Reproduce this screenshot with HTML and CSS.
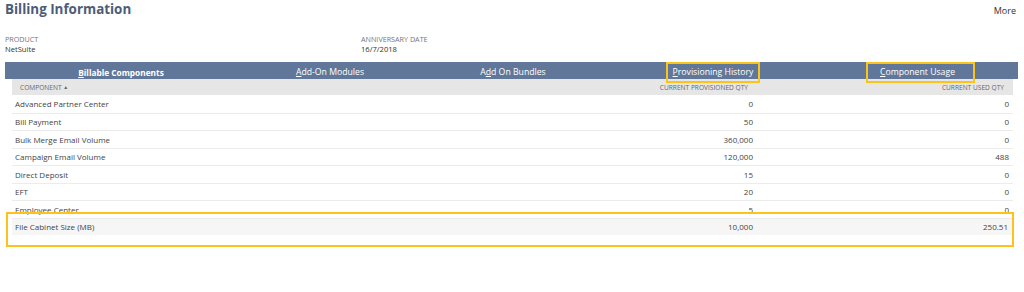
FILE: index.html
```html
<!DOCTYPE html>
<html lang="en">
<head>
    <meta charset="UTF-8">
    <title>Billing Information</title>
    <link rel="stylesheet" href="styles.css">
</head>
<body>
    <div class="page-header">
        <h1 class="page-title">Billing Information</h1>
        <a class="more-link">More</a>
    </div>

    <div class="fields">
        <div class="field field-product">
            <div class="field-label">Product</div>
            <div class="field-value">NetSuite</div>
        </div>
        <div class="field">
            <div class="field-label">Anniversary Date</div>
            <div class="field-value">16/7/2018</div>
        </div>
    </div>

    <div class="tabs">
        <div class="tab active"><span class="tab-text"><u>B</u>illable Components</span></div>
        <div class="tab"><span class="tab-text"><u>A</u>dd-On Modules</span></div>
        <div class="tab"><span class="tab-text">A<u>d</u>d On Bundles</span></div>
        <div class="tab"><span class="tab-text marked"><u>P</u>rovisioning History</span></div>
        <div class="tab"><span class="tab-text marked wide"><u>C</u>omponent Usage</span></div>
    </div>

    <div class="list">
        <div class="list-row list-head">
            <div class="cell">Component <span class="sort-arrow">&#9650;</span></div>
            <div class="cell num">Current Provisioned Qty</div>
            <div class="cell num">Current Used Qty</div>
        </div>
        <div class="list-row">
            <div class="cell">Advanced Partner Center</div>
            <div class="cell num">0</div>
            <div class="cell num">0</div>
        </div>
        <div class="list-row">
            <div class="cell">Bill Payment</div>
            <div class="cell num">50</div>
            <div class="cell num">0</div>
        </div>
        <div class="list-row">
            <div class="cell">Bulk Merge Email Volume</div>
            <div class="cell num">360,000</div>
            <div class="cell num">0</div>
        </div>
        <div class="list-row">
            <div class="cell">Campaign Email Volume</div>
            <div class="cell num">120,000</div>
            <div class="cell num">488</div>
        </div>
        <div class="list-row">
            <div class="cell">Direct Deposit</div>
            <div class="cell num">15</div>
            <div class="cell num">0</div>
        </div>
        <div class="list-row">
            <div class="cell">EFT</div>
            <div class="cell num">20</div>
            <div class="cell num">0</div>
        </div>
        <div class="list-row">
            <div class="cell">Employee Center</div>
            <div class="cell num">5</div>
            <div class="cell num">0</div>
        </div>
        <div class="highlight">
            <div class="list-row shaded">
                <div class="cell">File Cabinet Size (MB)</div>
                <div class="cell num">10,000</div>
                <div class="cell num">250.51</div>
            </div>
        </div>
    </div>
</body>
</html>
```

FILE: styles.css
```css
body {
    margin: 0;
    font-family: 'Open Sans', 'Liberation Sans', sans-serif;
    color: #333;
    background: #fff;
}

.page-header {
    display: flex;
    justify-content: space-between;
    align-items: flex-start;
    padding: 0 8px 0 5px;
}

.page-title {
    margin: 0;
    font-size: 13.4px;
    font-weight: 700;
    line-height: 19px;
    color: #4d5d78;
}

.more-link {
    font-size: 9px;
    color: #333;
    margin-top: 4px;
}

.fields {
    display: flex;
    padding: 14px 0 0 5px;
}

.field-product {
    width: 356px;
}

.field-label {
    font-size: 7.2px;
    text-transform: uppercase;
    color: #777;
    line-height: 10px;
    margin-top: 1px;
}

.field-value {
    font-size: 7.6px;
    color: #333;
    line-height: 10px;
}

.tabs {
    display: grid;
    grid-template-columns: 232px 186px 180px 220px 195px;
    height: 17px;
    margin: 8px 6px 0 5px;
    background: #607799;
}

.tab {
    position: relative;
    display: flex;
    align-items: center;
    justify-content: center;
    color: #fff;
    font-size: 8.7px;
}

.tab.active {
    font-weight: 700;
    font-size: 8.3px;
}

/* small pointer under the active tab */
.tab.active::after {
    content: '';
    position: absolute;
    left: 50%;
    bottom: 0;
    margin-left: -4px;
    border-left: 4px solid transparent;
    border-right: 4px solid transparent;
    border-bottom: 3px solid #e6e6e6;
}

.tab-text {
    line-height: 13px;
    padding: 2px 5px;
    border: 2px solid transparent;
}

.tab-text.marked {
    border-color: #fcc31b;
}

.tab-text.wide {
    padding: 2px 18px 2px 12px;
}

.list {
    margin: 0 11px 0 12px;
}

.list-row {
    display: grid;
    grid-template-columns: 400px 345px 1fr;
    align-items: center;
    height: 17.5px;
    box-sizing: border-box;
    border-top: 1px solid #ececec;
    font-size: 8px;
    color: #444;
}

.list-head {
    height: 16px;
    border-top: 0;
    background: #e6e6e6;
    font-size: 6.6px;
    text-transform: uppercase;
    color: #666;
}

.list-head + .list-row {
    border-top: 0;
}

.cell {
    padding: 0 4px 0 3px;
    white-space: nowrap;
}

.list-head .cell {
    padding-right: 9px;
}

.list-head .cell:first-child {
    padding-left: 8px;
}

.cell.num {
    text-align: right;
}

.sort-arrow {
    font-size: 5px;
    vertical-align: 1px;
}

.list-row.shaded {
    background: #f6f6f6;
}

/* annotation frame around the file cabinet row */
.highlight {
    position: relative;
    margin: -6px -1px 0 -6px;
    padding: 4px 0 10px 4px;
    border: 2px solid #fcc31b;
}
```
